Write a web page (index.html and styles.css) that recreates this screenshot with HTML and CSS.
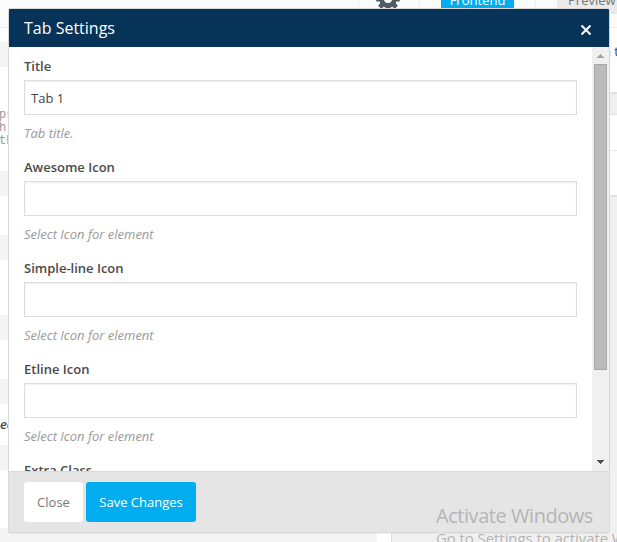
FILE: index.html
```html
<!DOCTYPE html>
<html lang="en">
<head>
<meta charset="utf-8">
<title>Tab Settings</title>
<link rel="stylesheet" href="styles.css">
</head>
<body>
<div class="page">
  <header class="topbar">
    <div class="cell cell-main"></div>
    <div class="cell cell-gear">
      <svg class="gear" width="24" height="24" viewBox="-12 -12 24 24"><g fill="#505b66"><circle r="8.8"/><rect x="-2.4" y="-11.8" width="4.8" height="23.6" rx=".6"/><rect x="-2.4" y="-11.8" width="4.8" height="23.6" rx=".6" transform="rotate(45)"/><rect x="-2.4" y="-11.8" width="4.8" height="23.6" rx=".6" transform="rotate(90)"/><rect x="-2.4" y="-11.8" width="4.8" height="23.6" rx=".6" transform="rotate(135)"/></g><circle r="4" fill="#fbfbfb"/></svg>
    </div>
    <div class="cell cell-front"><span class="frontend">Frontend</span></div>
    <div class="preview">Preview</div>
  </header>
  <div class="columns">
    <div class="content">
      <div class="gap g14"></div>
      <div class="bar"></div>
      <div class="gap g104"><pre class="code">ps
h 
th</pre></div>
      <div class="bar"></div>
      <div class="gap g39"></div>
      <div class="bar"></div>
      <div class="gap g55"></div>
      <div class="bar"></div>
      <div class="gap g39"></div>
      <div class="bar"></div>
      <div class="gap g41"><em class="need">ed</em></div>
      <div class="bar"></div>
      <div class="gap g58"></div>
      <div class="bar"></div>
    </div>
    <div class="gutter"></div>
    <aside class="side">
      <div class="panel first"><span>n t</span></div>
      <div class="panel second"><div class="panel-head"></div></div>
    </aside>
  </div>
</div>

<section class="modal">
  <div class="modal-head">
    <h1>Tab Settings</h1>
    <svg class="close-x" width="12" height="12" viewBox="0 0 12 12"><path d="M1.5 1.5L10.5 10.5M10.5 1.5L1.5 10.5" stroke="#fff" stroke-width="2"/></svg>
  </div>
  <div class="modal-body">
    <form class="fields">
      <div class="field"><label>Title</label><input type="text" value="Tab 1"><p>Tab title.</p></div>
      <div class="field"><label>Awesome Icon</label><input type="text"><p>Select Icon for element</p></div>
      <div class="field"><label>Simple-line Icon</label><input type="text"><p>Select Icon for element</p></div>
      <div class="field"><label>Etline Icon</label><input type="text"><p>Select Icon for element</p></div>
      <div class="field"><label>Extra Class</label></div>
    </form>
    <div class="scrollbar">
      <svg class="arrow" width="17" height="17" viewBox="0 0 17 17" shape-rendering="crispEdges"><path d="M8 7h1v1h1v1h1v1h1v1H5v-1h1V9h1V8h1z" fill="#a3a3a3"/></svg>
      <div class="thumb"></div>
      <svg class="arrow" width="17" height="17" viewBox="0 0 17 17" shape-rendering="crispEdges"><path d="M5 6h7v1h-1v1h-1v1H9v1H8V9H7V8H6V7H5z" fill="#505050"/></svg>
    </div>
  </div>
  <div class="modal-foot">
    <button class="btn btn-close">Close</button>
    <button class="btn btn-save">Save Changes</button>
  </div>
</section>

<div class="watermark"><div class="wm-title">Activate Windows</div><div class="wm-text">Go to Settings to activate Windows.</div></div>
</body>
</html>
```
FILE: styles.css
```css
* { box-sizing: border-box; }
body {
  margin: 0;
  width: 617px;
  height: 542px;
  overflow: hidden;
  position: relative;
  font-family: "Open Sans", "Noto Sans", sans-serif;
  font-size: 13px;
  color: #444;
  background: #fff;
}
.page { height: 542px; display: flex; flex-direction: column; overflow: hidden; }
.topbar { display: flex; height: 28px; flex: none; background: #fbfbfb; border-bottom: 1px solid #eee; }
.cell { border-right: 1px solid #eee; overflow: hidden; flex: none; }
.cell-main { width: 359px; }
.cell-gear { width: 61px; }
.gear { display: block; margin: -13px 0 0 17px; }
.cell-front { width: 116px; padding-left: 21px; }
.frontend {
  display: block; width: 73px; height: 8px; background: #00aef0; color: #fff;
  text-align: center; line-height: 0; font-weight: 500;
}
.preview {
  flex: 1; min-width: 0; height: 14px; margin-left: 21px; padding-left: 11px;
  background: #eaeaea; color: #777; line-height: 0; white-space: nowrap;
}
.columns { display: flex; flex: 1; }
.content { width: 377px; flex: none; }
.gutter { width: 14px; flex: none; }
.bar { height: 25px; background: #f4f4f4; }
.gap { background: #fff; }
.g14 { height: 14px; }
.g104 { height: 104px; padding-top: 42px; }
.g39 { height: 39px; }
.g55 { height: 55px; }
.g41 { height: 41px; padding-top: 11px; }
.g58 { height: 58px; }
.code { margin: 0 0 0 -1px; font: 12px/13px "Liberation Mono", monospace; color: #999; }
.need { display: block; font-weight: 600; line-height: 18px; color: #444; }
.side { flex: 1; min-width: 0; background: #f0f0f0; border-left: 1px solid #ddd; }
.panel { background: #fff; border-bottom: 2px solid #e2e2e2; }
.first { height: 66px; padding: 14px 0 0 211px; line-height: 18px; white-space: nowrap; overflow: hidden; }
.second { height: 83px; margin-top: 20px; border-top: 1px solid #e2e2e2; }
.panel-head { height: 36px; border-bottom: 1px solid #e8e8e8; }

.modal {
  position: absolute; left: 8px; top: 8px; width: 602px; height: 525px;
  border: 1px solid #d9d9d9; border-radius: 2px; background: #fff;
  display: flex; flex-direction: column; overflow: hidden;
  box-shadow: 0 1px 1px rgba(0,0,0,.05);
}
.modal-head {
  height: 38px; flex: none; background: #083358; display: flex;
  align-items: center; justify-content: space-between; padding: 0 17px 0 15px;
}
h1 { margin: 0; font-size: 16px; font-weight: 400; color: #fff; line-height: 38px; }
.close-x { margin-top: 4px; }
.modal-body { height: 424px; flex: none; display: flex; overflow: hidden; }
.fields { flex: 1; padding: 9px 15px 0; }
.field { height: 101px; }
.field label { display: block; height: 24px; line-height: 20px; font-weight: 600; color: #4a4a4a; }
.field input {
  display: block; width: 553px; height: 35px; padding: 0 6px; border: 1px solid #ddd;
  box-shadow: inset 0 1px 2px rgba(0,0,0,.07); background: #fff; outline: 0;
  font: 13px "Open Sans", sans-serif; color: #444;
}
.field p { margin: 8px 0 0; line-height: 20px; font-style: italic; color: #999; }
.scrollbar { width: 17px; background: #f0f0f0; display: flex; flex-direction: column; }
.arrow { display: block; flex: none; }
.thumb { width: 13px; height: 306px; margin: 0 0 auto 2px; background: #bbb; border: 1px solid #a8a8a8; }
.modal-foot { flex: 1; background: #e5e5e5; border-top: 1px solid #d9d9d9; padding: 10px 15px; display: flex; gap: 3px; }
.btn { height: 40px; border: 0; border-radius: 3px; padding: 0; font: 13px "Open Sans", sans-serif; }
.btn-close { width: 59px; background: #fff; color: #777; }
.btn-save { width: 110px; background: #00aef0; color: #fff; font-weight: 500; }
.watermark { position: absolute; left: 436px; top: 503px; width: 181px; overflow: hidden; color: #b5b5b5; white-space: nowrap; }
.wm-title { font-size: 20px; line-height: 26px; letter-spacing: -.45px; }
.wm-text { font-size: 15px; line-height: 19px; letter-spacing: -.08px; }
```
